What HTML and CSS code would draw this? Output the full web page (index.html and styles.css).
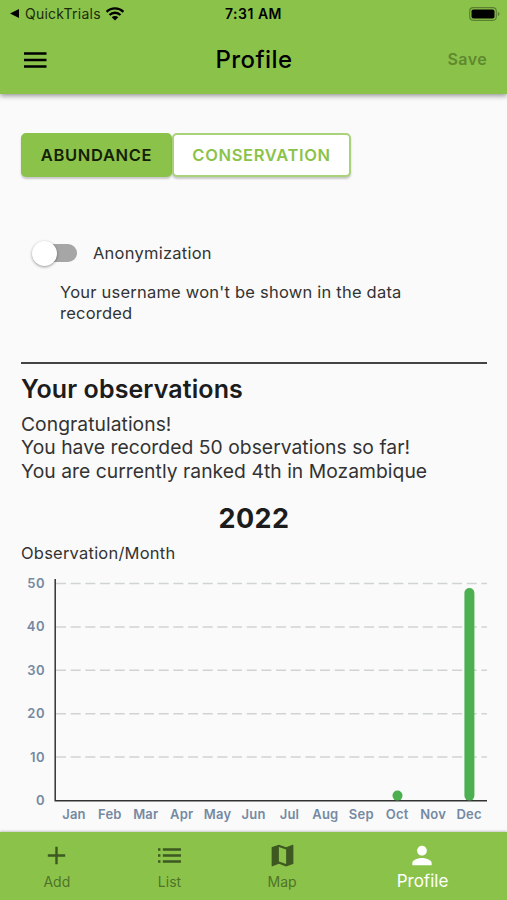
FILE: index.html
```html
<!DOCTYPE html>
<html lang="en">

<head>
    <meta charset="UTF-8">
    <meta name="viewport" content="width=device-width, initial-scale=1.0">
    <title>Profile</title>
    <link rel="stylesheet" href="styles.css">
</head>

<body>

    <header class="header">
        <div class="status">
            <div class="status-left">
                <svg width="9" height="9" viewBox="0 0 9 9"><path d="M0 4.5L9 0v9z"/></svg>
                <span class="back">QuickTrials</span>
                <svg class="wifi" width="20" height="14" viewBox="0 0 20 14">
                    <path d="M1.6 4.9a12 12 0 0 1 16.8 0M4.5 8a7.8 7.8 0 0 1 11 0" fill="none" stroke="#000" stroke-width="2.3"/>
                    <path d="M10 13.6L6.7 10.3a4.7 4.7 0 0 1 6.6 0z"/>
                </svg>
            </div>
            <div class="time">7:31 AM</div>
            <div class="status-right">
                <svg width="31" height="14" viewBox="0 0 31 14">
                    <rect x=".7" y=".7" width="26.6" height="12.6" rx="3.5" fill="none" stroke="#5b8130" stroke-width="1.2"/>
                    <rect x="2.5" y="2.5" width="23" height="9" rx="1.8"/>
                    <path d="M28.8 4.8q1.8.8 1.8 2.2t-1.8 2.2z" fill="#5b8130"/>
                </svg>
            </div>
        </div>
        <div class="toolbar">
            <svg class="menu" width="24" height="16" viewBox="0 0 24 16"><path d="M1 1.5h22.5M1 8h22.5M1 14.5h22.5" stroke="#000" stroke-width="2.4"/></svg>
            <h1>Profile</h1>
            <div class="save">Save</div>
        </div>
    </header>

    <main class="content">
        <div class="buttons">
            <button class="button active">ABUNDANCE</button>
            <button class="button">CONSERVATION</button>
        </div>

        <div class="option">
            <div class="switch"><div class="knob"></div></div>
            <span class="option-name">Anonymization</span>
        </div>
        <p class="hint">Your username won't be shown in the data<br>recorded</p>

        <section class="observations">
            <h2>Your observations</h2>
            <p class="summary">
                Congratulations!<br>
                You have recorded 50 observations so far!<br>
                You are currently ranked 4th in Mozambique
            </p>
            <h3>2022</h3>
            <p class="unit">Observation/Month</p>

            <div class="chart">
                <div class="values">
                    <span>50</span>
                    <span>40</span>
                    <span>30</span>
                    <span>20</span>
                    <span>10</span>
                    <span>0</span>
                </div>
                <svg class="plot" width="433" height="224" viewBox="0 0 433 224">
                    <!-- grid -->
                    <path d="M2 5.5h431M2 48.9h431M2 92.3h431M2 135.7h431M2 179.1h431" fill="none" stroke="#cfd3d3" stroke-width="1.5" stroke-dasharray="10 4.67"/>
                    <!-- axes -->
                    <path d="M1.2 1v221.7H433" fill="none" stroke="#333" stroke-width="1.5"/>
                    <!-- Oct, Dec -->
                    <rect x="338.5" y="212.6" width="10" height="10" rx="5" fill="#4caf50"/>
                    <rect x="410.4" y="10" width="10" height="212.6" rx="5" fill="#4caf50"/>
                </svg>
                <div class="months">
                    <span>Jan</span>
                    <span>Feb</span>
                    <span>Mar</span>
                    <span>Apr</span>
                    <span>May</span>
                    <span>Jun</span>
                    <span>Jul</span>
                    <span>Aug</span>
                    <span>Sep</span>
                    <span>Oct</span>
                    <span>Nov</span>
                    <span>Dec</span>
                </div>
            </div>
        </section>
    </main>

    <nav class="nav">
        <a class="nav-item">
            <svg width="29" height="28" viewBox="0 0 24 24"><path d="M19.2 13H13v6.2h-2V13H4.8v-2H11V4.8h2V11h6.2z"/></svg>
            <span>Add</span>
        </a>
        <a class="nav-item">
            <svg width="29" height="28" viewBox="0 0 24 24"><path d="M2.5 6.1h2v2h-2zM2.5 11h2v2h-2zM2.5 15.9h2v2h-2zM6.5 6.1h15v2h-15zM6.5 11h15v2h-15zM6.5 15.9h15v2h-15z"/></svg>
            <span>List</span>
        </a>
        <a class="nav-item">
            <svg width="29" height="29" viewBox="0 0 24 24"><path d="M20.5 3l-.16.03L15 5.1 9 3 3.36 4.9c-.21.07-.36.25-.36.48V20.5c0 .28.22.5.5.5l.16-.03L9 18.9l6 2.1 5.64-1.9c.21-.07.36-.25.36-.48V3.5c0-.28-.22-.5-.5-.5zM15 19l-6-2.11V5l6 2.11V19z"/></svg>
            <span>Map</span>
        </a>
        <a class="nav-item current">
            <svg width="30" height="30" viewBox="0 0 24 24"><path d="M12 12c2.21 0 4-1.79 4-4s-1.79-4-4-4-4 1.79-4 4 1.79 4 4 4zm0 2c-2.67 0-8 1.34-8 4v2h16v-2c0-2.66-5.33-4-8-4z"/></svg>
            <span>Profile</span>
        </a>
    </nav>

</body>

</html>
```

FILE: styles.css
```css
* {
    margin: 0;
    padding: 0;
    box-sizing: border-box;
}

body {
    display: flex;
    flex-direction: column;
    height: 900px;
    overflow: hidden;
    background-color: #fafafa;
    color: #333;
    font-family: Inter, "Liberation Sans", sans-serif;
}

svg {
    display: block;
}

.header {
    height: 94px;
    background-color: #8bc34a;
    color: #000;
    box-shadow: 0 2px 5px rgba(0, 0, 0, 0.4);
}

.status {
    display: grid;
    grid-template-columns: 1fr auto 1fr;
    align-items: center;
    height: 27px;
    padding: 0 7px 0 10px;
}

.status-left {
    display: flex;
    align-items: center;
}

.back {
    margin-left: 6px;
    font-size: 14px;
    letter-spacing: 0.25px;
    color: #1d2a0e;
}

.wifi {
    margin-left: 4px;
}

.time {
    margin-right: 3px;
    font-size: 14px;
    font-weight: 600;
    letter-spacing: 0.5px;
}

.status-right {
    display: flex;
    justify-content: flex-end;
}

.toolbar {
    display: grid;
    grid-template-columns: 1fr auto 1fr;
    align-items: center;
    height: 66px;
    padding: 0 20px 0 23px;
}

h1 {
    margin: -1px 2px 0 0;
    font-size: 24px;
    font-weight: 500;
    letter-spacing: 0.4px;
}

.save {
    margin-top: -2px;
    text-align: right;
    font-size: 16px;
    font-weight: 600;
    letter-spacing: 0.4px;
    color: #60892f;
}

.content {
    flex: 1;
    padding: 39px 20px 0 21px;
}

.buttons {
    display: flex;
}

.button {
    width: 151px;
    height: 44px;
    border: 2px solid #a9d27a;
    border-radius: 5px;
    background-color: #fff;
    color: #8bc34a;
    font-family: inherit;
    font-size: 16.5px;
    font-weight: 600;
    letter-spacing: 0.65px;
    box-shadow: 0 2px 2px rgba(0, 0, 0, 0.2);
}

.button + .button {
    width: 179px;
}

.button.active {
    border-color: #8bc34a;
    background-color: #8bc34a;
    color: #142006;
}

.option {
    display: flex;
    align-items: center;
    height: 28px;
    margin-top: 62px;
    padding-left: 11px;
}

.switch {
    display: flex;
    align-items: center;
    width: 45px;
    height: 18px;
    background: linear-gradient(#a6a6a6, #a6a6a6) right / 33px 18px no-repeat;
    border-radius: 9px;
}

.knob {
    width: 25px;
    height: 25px;
    flex: none;
    border-radius: 50%;
    background-color: #fff;
    box-shadow: 0 1px 3px rgba(0, 0, 0, 0.4);
}

.option-name {
    margin-left: 16px;
    font-size: 16.5px;
    letter-spacing: 0.24px;
}

.hint {
    margin: 15px 0 0 39px;
    font-size: 16.5px;
    line-height: 21px;
    letter-spacing: 0.22px;
}

.observations {
    margin-top: 38px;
    border-top: 2px solid #444;
}

h2 {
    margin-top: 10px;
    font-size: 25px;
    font-weight: 600;
    line-height: 30px;
    letter-spacing: 0.1px;
    color: #1c1c1c;
}

.summary {
    margin-top: 9px;
    font-size: 19.3px;
    line-height: 23.3px;
    letter-spacing: 0.04px;
}

h3 {
    margin-top: 20px;
    text-align: center;
    font-size: 27px;
    font-weight: 700;
    line-height: 32px;
    letter-spacing: 0.4px;
    color: #1c1c1c;
}

.unit {
    margin-top: 8px;
    font-size: 16.5px;
    line-height: 20px;
    letter-spacing: 0.22px;
}

.chart {
    display: grid;
    grid-template-columns: 24px 433px;
    column-gap: 9px;
    margin-top: 15px;
    font-weight: 600;
    color: #7589a2;
}

.values {
    display: flex;
    flex-direction: column;
    text-align: right;
    font-size: 13px;
    line-height: 43.4px;
    margin: -16px 0 -20px;
    letter-spacing: 0.5px;
}

.months {
    grid-column: 2;
    display: grid;
    grid-template-columns: repeat(12, 1fr);
    margin-top: 3px;
    padding-left: 2px;
    text-align: center;
    font-size: 13px;
    line-height: 18px;
    letter-spacing: 0.2px;
}

.nav {
    display: grid;
    grid-template-columns: 1fr 1fr 1fr 1.5fr;
    height: 68px;
    background-color: #8bc34a;
    box-shadow: 0 -1px 2px rgba(0, 0, 0, 0.2);
}

.nav-item {
    display: flex;
    flex-direction: column;
    align-items: center;
    padding: 9px 0 0 1px;
    fill: #3d5820;
    color: #507329;
    font-size: 14px;
    line-height: 24px;
}

.nav-item svg {
    height: 29px;
}

.nav-item.current {
    padding: 9px 0 0;
    fill: #fff;
    color: #fff;
    font-size: 17px;
    line-height: 22px;
}
```
